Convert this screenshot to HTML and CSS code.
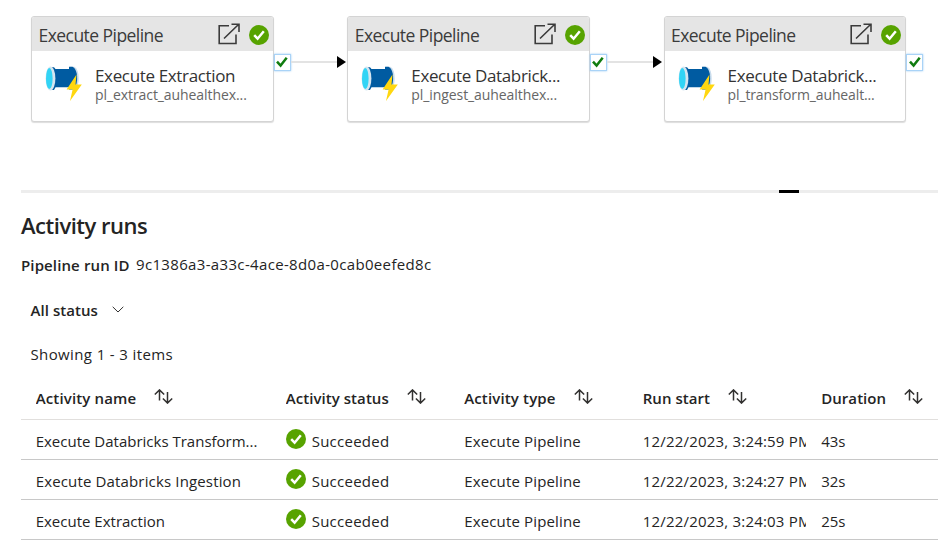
FILE: index.html
```html
<!DOCTYPE html>
<html lang="en">
<head>
<meta charset="utf-8">
<title>Activity runs</title>
<link rel="stylesheet" href="styles.css">
</head>
<body>
<svg class="defs" width="0" height="0" aria-hidden="true">
  <symbol id="ok" viewBox="0 0 20 20"><circle cx="10" cy="10" r="10" fill="#57a300"/><path d="M5.2 10.2l3.4 3.5 6.2-7.4" fill="none" stroke="#fff" stroke-width="2.5"/></symbol>
  <symbol id="open" viewBox="0 0 22 22"><path d="M11 2.7H1.2V20.5H18V11.5M6 15.500L20.500 1.500M13.500 1.200H21V9" fill="none" stroke="#3b3b3b" stroke-width="1.600"/></symbol>
  <symbol id="pipe" viewBox="0 0 38 36">
    <path d="M25 .8h4.500c3 2 4.200 6 4.200 11.200s-1.200 9.500-4.200 11.500H25z" fill="#c9dcec"/>
    <path d="M24 .8h3.500c3.300 2 4.600 6 4.600 11.200s-1.300 9.500-4.600 11.500H24z" fill="#005ba1"/>
    <path d="M4 1.200h5l1.500 1.800h15l1.500-1.800c2.400 2.500 3 6.500 3 11s-.6 8-3 10.500l-1.500-1.500h-15L9 24H4z" fill="#005ba1"/>
    <ellipse cx="5.500" cy="12.500" rx="4.900" ry="12" fill="#d5e5ef"/>
    <ellipse cx="4.300" cy="12.500" rx="3.300" ry="10.500" fill="#32d4f5"/>
    <path d="M31.500 8.500L21.600 23.600h6L25 35l11.800-16.500h-6.300z" fill="#ffd70f"/>
  </symbol>
  <symbol id="sort" viewBox="0 0 19 15"><path d="M5.500 11.500V1M.8 5.500L5.500.9l4.700 4.600M13.500 3v11M8.900 9.500l4.600 4.600 4.700-4.600" fill="none" stroke="#323130" stroke-width="1.500"/></symbol>
  <symbol id="tick" viewBox="0 0 12 12"><path d="M1 5.600l3.600 4L10.700 1.800" fill="none" stroke="#107c10" stroke-width="2.500"/></symbol>
</svg>

<section class="canvas">
  <article class="card">
    <header class="card-head"><span class="kind">Execute Pipeline</span><svg class="open"><use href="#open"/></svg><svg class="ok"><use href="#ok"/></svg></header>
    <div class="card-body"><svg class="pipe"><use href="#pipe"/></svg><div><div class="name">Execute Extraction</div><div class="sub">pl_extract_auhealthex...</div></div></div>
  </article>
  <div class="link"><span class="port"><svg class="tick"><use href="#tick"/></svg></span><span class="line"></span><span class="arrow"></span></div>
  <article class="card">
    <header class="card-head"><span class="kind">Execute Pipeline</span><svg class="open"><use href="#open"/></svg><svg class="ok"><use href="#ok"/></svg></header>
    <div class="card-body"><svg class="pipe"><use href="#pipe"/></svg><div><div class="name">Execute Databrick...</div><div class="sub">pl_ingest_auhealthex...</div></div></div>
  </article>
  <div class="link"><span class="port"><svg class="tick"><use href="#tick"/></svg></span><span class="line"></span><span class="arrow"></span></div>
  <article class="card">
    <header class="card-head"><span class="kind">Execute Pipeline</span><svg class="open"><use href="#open"/></svg><svg class="ok"><use href="#ok"/></svg></header>
    <div class="card-body"><svg class="pipe"><use href="#pipe"/></svg><div><div class="name">Execute Databrick...</div><div class="sub tight">pl_transform_auhealt...</div></div></div>
  </article>
  <div class="link"><span class="port"><svg class="tick"><use href="#tick"/></svg></span></div>
</section>

<div class="splitter"><span class="grip"></span></div>

<section class="runs">
  <h1 class="title">Activity runs</h1>
  <p class="run-id"><span class="label">Pipeline run ID</span><span class="value">9c1386a3-a33c-4ace-8d0a-0cab0eefed8c</span></p>
  <div class="filter"><span class="filter-text">All status</span><svg class="chev" viewBox="0 0 12 7"><path d="M.7.8L6 6 11.300.8" fill="none" stroke="#323130" stroke-width="1"/></svg></div>
  <p class="count">Showing 1 - 3 items</p>
  <div class="table">
    <div class="row head">
      <div class="cell"><span class="snug">Activity name</span><svg class="sort"><use href="#sort"/></svg></div>
      <div class="cell"><span>Activity status</span><svg class="sort"><use href="#sort"/></svg></div>
      <div class="cell"><span class="snug">Activity type</span><svg class="sort"><use href="#sort"/></svg></div>
      <div class="cell"><span>Run start</span><svg class="sort"><use href="#sort"/></svg></div>
      <div class="cell last"><span>Duration</span><svg class="sort"><use href="#sort"/></svg></div>
    </div>
    <div class="row">
      <div class="cell">Execute Databricks Transform...</div>
      <div class="cell loose"><svg class="ok"><use href="#ok"/></svg><span>Succeeded</span></div>
      <div class="cell snug">Execute Pipeline</div><div class="cell date">12/22/2023, 3:24:59 PM</div><div class="cell">43s</div>
    </div>
    <div class="row">
      <div class="cell snug">Execute Databricks Ingestion</div>
      <div class="cell loose"><svg class="ok"><use href="#ok"/></svg><span>Succeeded</span></div>
      <div class="cell snug">Execute Pipeline</div><div class="cell date">12/22/2023, 3:24:27 PM</div><div class="cell">32s</div>
    </div>
    <div class="row">
      <div class="cell">Execute Extraction</div>
      <div class="cell loose"><svg class="ok"><use href="#ok"/></svg><span>Succeeded</span></div>
      <div class="cell snug">Execute Pipeline</div><div class="cell date">12/22/2023, 3:24:03 PM</div><div class="cell">25s</div>
    </div>
  </div>
</section>
</body>
</html>
```
FILE: styles.css
```css
* { box-sizing: border-box; }
body { margin: 0; width: 938px; height: 543px; overflow: hidden; background: #fff; color: #242424; font-family: "Open Sans", "Noto Sans", sans-serif; font-size: 15px; white-space: nowrap; }
h1, p { margin: 0; font-weight: 400; }
svg { display: block; flex: none; }
.defs { position: absolute; }

.canvas { display: flex; height: 190px; padding: 16px 0 0 31px; align-items: flex-start; }
.card { flex: none; width: 242.700px; height: 106px; border: 1px solid #d4d4d4; border-radius: 3px; background: #fff; box-shadow: 0 1px 1px #ddd; overflow: hidden; }
.card-head { display: flex; align-items: center; height: 34px; padding: 0 4px 0 6.500px; background: #e5e5e5; color: #3b3b3b; }
.kind { flex: 1; font-size: 17.500px; letter-spacing: -.550px; padding-top: 2px; }
.open { width: 22px; height: 22px; margin: 0 9px 1px 0; }
.ok { width: 20px; height: 20px; }
.card-head .ok { margin-top: 1px; }
.card-body { display: flex; padding: 13px 0 0 13px; color: #333; }
.pipe { width: 38px; height: 36px; margin: 2px 12px 0 0; }
.name { font-size: 17px; line-height: 22px; letter-spacing: -.350px; padding-top: 1px; }
.sub { font-size: 14px; line-height: 17px; letter-spacing: -.080px; color: #666; margin-top: -1px; }
.tight { letter-spacing: -.130px; }
.link { flex: none; display: flex; align-items: center; width: 73.600px; height: 18px; margin-top: 37px; }
.port { display: flex; align-items: center; justify-content: center; width: 17px; height: 17px; border: 1px solid #a9d3f7; background: #fff; box-shadow: 0 0 2px #9ccbf3; }
.tick { width: 12px; height: 12px; }
.line { flex: 1; height: 2px; background: #e3e3e3; }
.arrow { border-left: 9px solid #000; border-top: 6px solid transparent; border-bottom: 6px solid transparent; margin-right: 1.500px; }

.splitter { height: 3px; margin-left: 21px; background: #ededed; padding-left: 758px; }
.grip { display: block; width: 20px; height: 3px; background: #000; }

.runs { padding: 17px 0 0 21px; }
.title { font-size: 22px; font-weight: 550; line-height: 30px; letter-spacing: -.480px; }
.run-id { display: flex; line-height: 22px; margin-top: 13px; }
.label { width: 115px; font-weight: 550; padding-top: 1px; letter-spacing: .120px; }
.value { letter-spacing: .340px; }
.filter { display: flex; align-items: center; height: 22px; margin: 23px 0 0 9.500px; font-weight: 550; letter-spacing: .050px; }
.filter-text { width: 81px; }
.chev { width: 12px; height: 7px; margin-bottom: 2px; }
.count { margin: 22px 0 0 9.500px; line-height: 22px; letter-spacing: .380px; }
.table { margin-top: 13px; }
.row { display: grid; grid-template-columns: 250px 178.500px 178.500px 178.500px 1fr; height: 40px; padding-left: 14.700px; border-bottom: 1px solid #c8c8c8; }
.head { height: 42px; font-weight: 550; border-color: #e1dfdd; letter-spacing: .060px; }
.cell { display: flex; align-items: center; margin-right: 15px; padding-top: 3px; overflow: hidden; }
.head .cell { padding: 0 0 2px; }
.snug { letter-spacing: .150px; }
.loose { letter-spacing: .250px; }
.date { letter-spacing: .200px; }
.last { margin-right: 0; }
.sort { width: 19px; height: 15px; margin: 0 0 2px 18px; }
.cell .ok { margin: 0 6px 4px 0; }
```
